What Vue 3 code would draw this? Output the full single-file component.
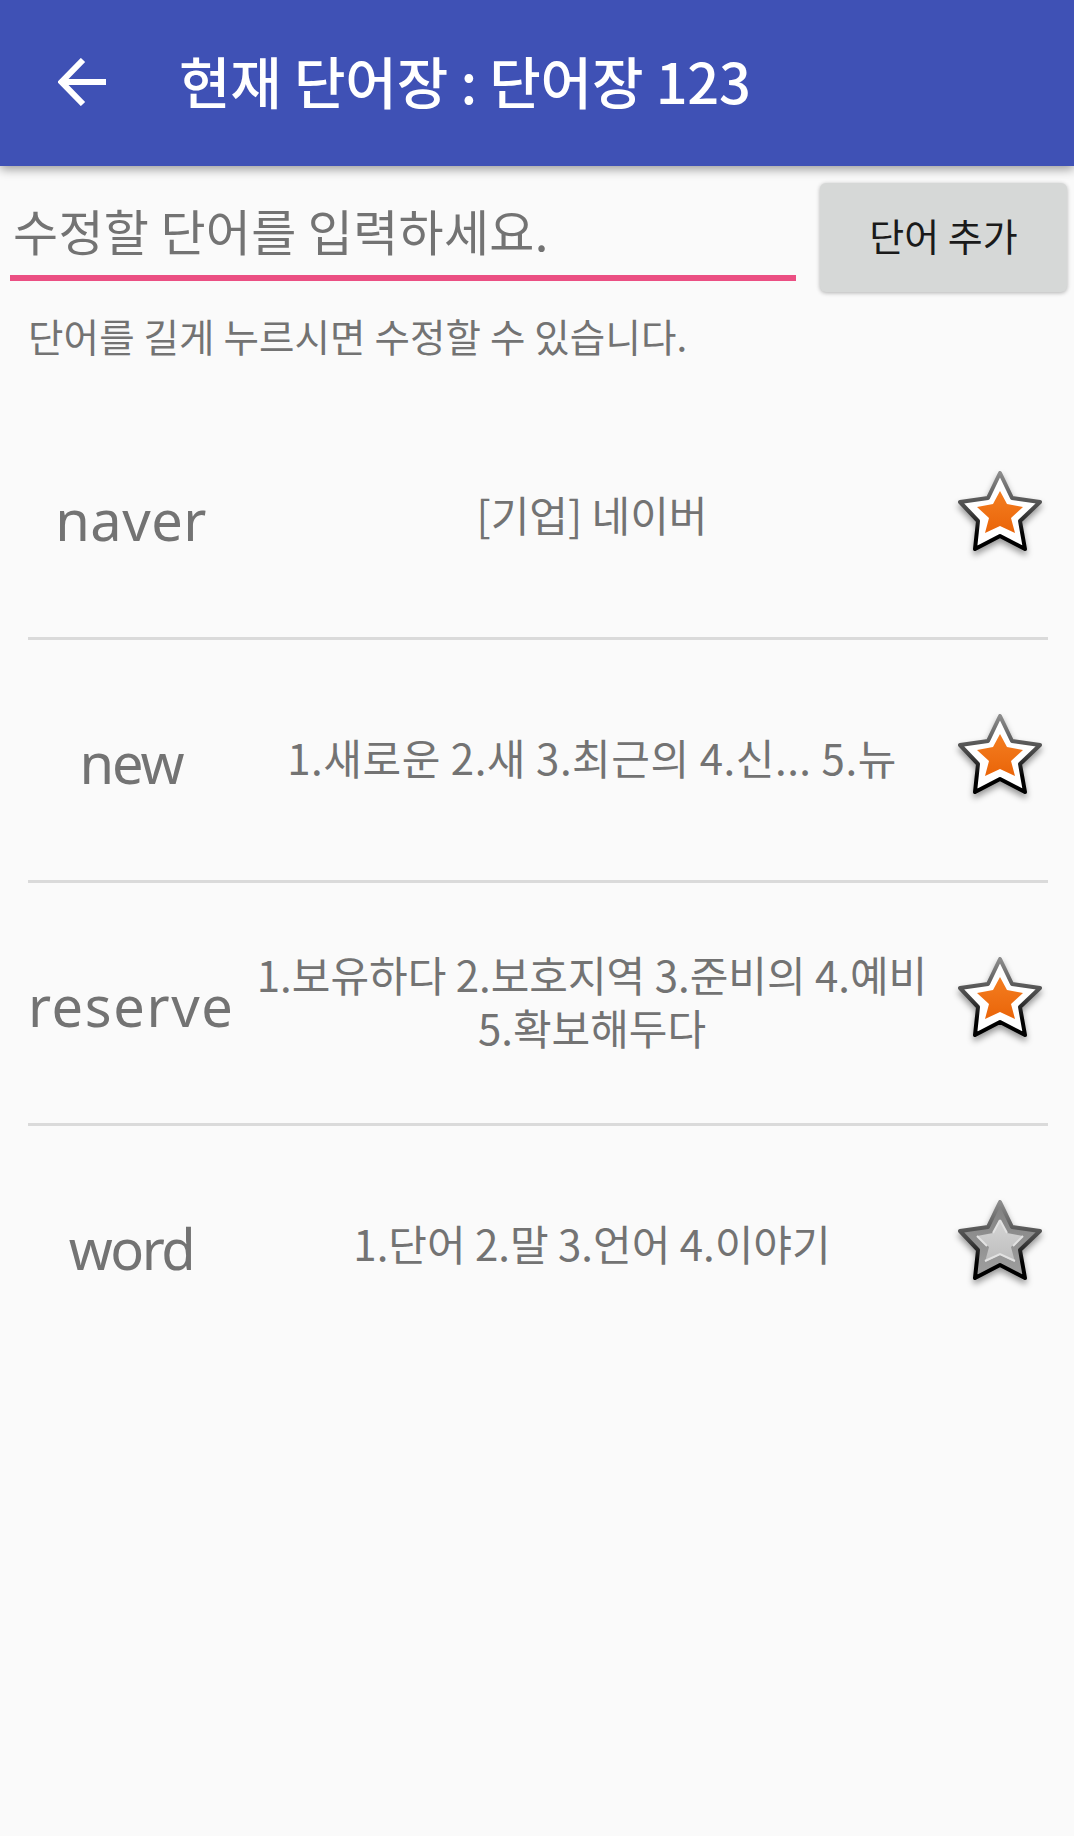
<template>
  <div class="page">
    <header class="toolbar">
      <svg class="back" viewBox="0 0 48 48">
        <path d="M25 2 L3.5 24 L25 46 M3.5 24 H48" />
      </svg>
      <h1>현재 단어장 : 단어장 123</h1>
    </header>

    <div class="addRow">
      <input v-model="newWord" type="text" placeholder="수정할 단어를 입력하세요." />
      <button @click="addWord">단어 추가</button>
    </div>
    <p class="hint">단어를 길게 누르시면 수정할 수 있습니다.</p>

    <ul class="wordList">
      <li v-for="item in words" :key="item.word" :class="'row-' + item.word">
        <span class="word">{{ item.word }}</span>
        <span class="meaning">{{ item.meaning }}</span>
        <svg
          class="star"
          :class="{ starred: item.starred }"
          viewBox="0 0 120 120"
          @click="item.starred = !item.starred">
          <defs>
            <linearGradient id="edge" x1="0" y1="0" x2="0" y2="1">
              <stop offset="0" stop-color="#8c8c8c" />
              <stop offset="0.5" stop-color="#444" />
              <stop offset="0.8" stop-color="#000" />
            </linearGradient>
            <linearGradient id="orange" x1="0" y1="0" x2="0" y2="1">
              <stop offset="0" stop-color="#f47d20" />
              <stop offset="1" stop-color="#ea6509" />
            </linearGradient>
            <linearGradient id="grey" x1="0" y1="0" x2="0" y2="1">
              <stop offset="0" stop-color="#808080" />
              <stop offset="1" stop-color="#a0a0a0" />
            </linearGradient>
            <linearGradient id="light" x1="0" y1="0" x2="0" y2="1">
              <stop offset="0" stop-color="#d5d5d5" />
              <stop offset="1" stop-color="#bdbdbd" />
            </linearGradient>
          </defs>
          <polygon
            class="outer"
            points="60,22 72,47 100,51 80,70 85,98 60,85 35,98 38,70 20,51 48,47" />
          <polygon
            class="inner"
            points="60,40 67,53 83,56 71,67 75,82 60,75 45,82 49,67 37,56 53,53" />
          <path
            v-if="!item.starred"
            class="shine"
            d="M60 40 L53 53 M37 56 L47 66 M60 40 L67 53 M83 56 L73 66 M45 81 L60 74 L75 81" />
        </svg>
      </li>
    </ul>
  </div>
</template>

<script setup>
import { ref } from "vue";

const newWord = ref("");

const words = ref([
  { word: "naver", meaning: "[기업] 네이버", starred: true },
  { word: "new", meaning: "1.새로운 2.새 3.최근의 4.신... 5.뉴", starred: true },
  {
    word: "reserve",
    meaning: "1.보유하다 2.보호지역 3.준비의 4.예비\n5.확보해두다",
    starred: true,
  },
  { word: "word", meaning: "1.단어 2.말 3.언어 4.이야기", starred: false },
]);

function addWord() {
  if (!newWord.value) return;
  words.value.push({ word: newWord.value, meaning: "", starred: false });
  newWord.value = "";
}
</script>

<style>
body {
  margin: 0;
  background: #fafafa;
}
</style>

<style scoped>
.page {
  min-height: 1836px;
  background: #fafafa;
  color: #737373;
  font-family: "Noto Sans CJK KR", sans-serif;
  overflow: hidden;
}
.toolbar {
  display: flex;
  align-items: center;
  height: 166px;
  background: #3f51b5;
  box-shadow: 0 3px 10px rgba(0, 0, 0, 0.4);
}
.back {
  width: 48px;
  height: 48px;
  margin: 0 0 2px 58px;
  fill: none;
  stroke: #fff;
  stroke-width: 6;
}
.toolbar h1 {
  margin: 0 0 6px 73px;
  font-size: 56px;
  font-weight: 500;
  line-height: 80px;
  letter-spacing: -0.2px;
  color: #fff;
  white-space: nowrap;
}
.addRow {
  display: flex;
  justify-content: space-between;
  padding: 17px 7px 0 10px;
}
.addRow input {
  box-sizing: border-box;
  width: 786px;
  height: 98px;
  padding: 0 3px;
  border: none;
  border-bottom: 6px solid #eb4f83;
  outline: none;
  background: transparent;
  color: #333;
  font-family: inherit;
  font-size: 49px;
  letter-spacing: 0.3px;
}
.addRow input::placeholder {
  color: #737373;
  opacity: 1;
}
.addRow button {
  width: 247px;
  height: 109px;
  padding: 0 0 7px;
  border: none;
  border-radius: 6px;
  background: #d6d8d7;
  box-shadow: 0 1px 4px rgba(0, 0, 0, 0.3);
  color: #1a1a1a;
  font-family: inherit;
  font-size: 38px;
  cursor: pointer;
}
.hint {
  margin: 13px 0 0 28px;
  font-size: 38.5px;
  line-height: 60px;
  letter-spacing: 0.15px;
  white-space: nowrap;
}
.wordList {
  margin: 32px 26px 0 28px;
  padding: 0;
  list-style: none;
}
.wordList li {
  display: grid;
  grid-template-columns: 206px 716px 98px;
  align-items: center;
  height: 240px;
  border-bottom: 3px solid #dadada;
}
.wordList li:last-child {
  border-bottom: none;
}
.word {
  padding-top: 4px;
  font-family: "Noto Sans", sans-serif;
  font-size: 56px;
  line-height: 76px;
  text-align: center;
  white-space: nowrap;
}
.row-naver .word {
  letter-spacing: 0.5px;
}
.row-new .word {
  letter-spacing: -2px;
}
.row-reserve .word {
  letter-spacing: 1.6px;
}
.row-word .word {
  letter-spacing: -2.5px;
}
.meaning {
  padding-bottom: 7px;
  font-size: 42px;
  line-height: 53px;
  text-align: center;
  white-space: pre;
}
.row-new .meaning {
  letter-spacing: 0.55px;
}
.star {
  width: 120px;
  height: 120px;
  margin: -12px 0 0 -10px;
  overflow: visible;
  filter: drop-shadow(0 4px 3px rgba(0, 0, 0, 0.4));
  cursor: pointer;
}
.outer {
  fill: url(#grey);
  stroke: url(#edge);
  stroke-width: 4;
  stroke-linejoin: round;
}
.inner {
  fill: url(#light);
}
.shine {
  fill: none;
  stroke: #e2e2e2;
  stroke-width: 2;
}
.starred .outer {
  fill: #fff;
}
.starred .inner {
  fill: url(#orange);
}
</style>
